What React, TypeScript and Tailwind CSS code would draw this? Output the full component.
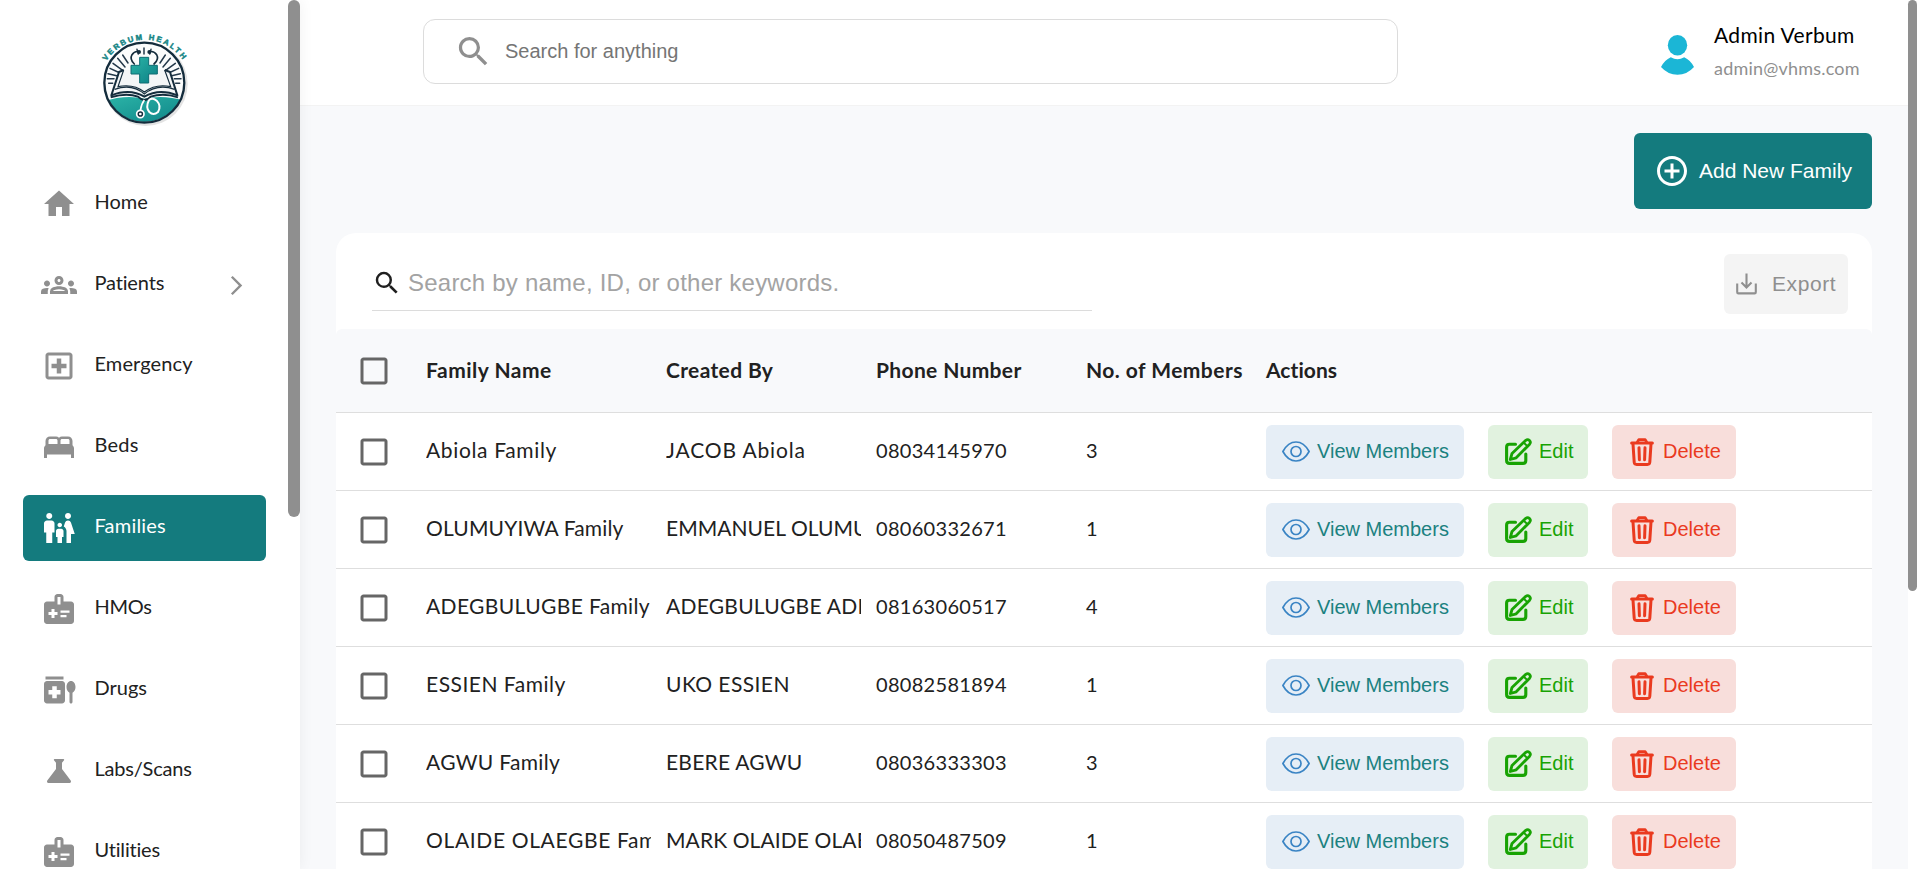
import type { ComponentType, ReactNode } from "react";
import {
  MdHome,
  MdOutlineGroups,
  MdOutlineLocalHospital,
  MdFamilyRestroom,
  MdMedicalInformation,
  MdMedicationLiquid,
  MdScience,
  MdSearch,
  MdArrowForwardIos,
  MdAddCircleOutline,
  MdCheckBoxOutlineBlank,
} from "react-icons/md";

function BedIcon({ className }: { className?: string }) {
  return (
    <svg viewBox="0 0 24 24" fill="currentColor" className={className}>
      <path d="M21 10.78V8c0-1.65-1.35-3-3-3h-4c-.77 0-1.47.3-2 .78-.53-.48-1.23-.78-2-.78H6C4.35 5 3 6.35 3 8v2.78c-.61.55-1 1.34-1 2.22v6.3h2v-2.3h16v2.3h2V13c0-.88-.39-1.67-1-2.22zM14 6.6h4c.55 0 1 .45 1 1V10h-6V7.6c0-.55.45-1 1-1zM5 7.6c0-.55.45-1 1-1h4c.55 0 1 .45 1 1V10H5V7.6z" />
    </svg>
  );
}

type NavItem = {
  label: string;
  icon: ComponentType<{ className?: string }>;
  tracking?: string;
  active?: boolean;
  nested?: boolean;
};

const nav: NavItem[] = [
  { label: "Home", icon: MdHome },
  { label: "Patients", icon: MdOutlineGroups, tracking: "tracking-[-0.15px]", nested: true },
  { label: "Emergency", icon: MdOutlineLocalHospital, tracking: "tracking-[0.1px]" },
  { label: "Beds", icon: BedIcon, tracking: "tracking-[0.2px]" },
  { label: "Families", icon: MdFamilyRestroom, tracking: "tracking-[0.2px]", active: true },
  { label: "HMOs", icon: MdMedicalInformation, tracking: "tracking-[-0.3px]" },
  { label: "Drugs", icon: MdMedicationLiquid },
  { label: "Labs/Scans", icon: MdScience, tracking: "tracking-[-0.2px]" },
  { label: "Utilities", icon: MdMedicalInformation, tracking: "tracking-[-0.2px]" },
];

const headings = [
  { title: "Family Name", tracking: "tracking-[0.5px]" },
  { title: "Created By", tracking: "tracking-[0.35px]" },
  { title: "Phone Number", tracking: "tracking-[0.35px]" },
  { title: "No. of Members", tracking: "tracking-[0.45px]" },
  { title: "Actions", tracking: "tracking-[0.05px]" },
];

const families = [
  { name: "Abiola Family", nameTracking: "tracking-[0.65px]", by: "JACOB Abiola", byTracking: "tracking-[0.85px]", phone: "08034145970", members: 3 },
  { name: "OLUMUYIWA Family", nameTracking: "tracking-[0.15px]", by: "EMMANUEL OLUMU", byTracking: "tracking-[0.05px]", phone: "08060332671", members: 1 },
  { name: "ADEGBULUGBE Family", nameTracking: "tracking-[0.37px]", by: "ADEGBULUGBE ADE", byTracking: "tracking-[0.25px]", phone: "08163060517", members: 4 },
  { name: "ESSIEN Family", nameTracking: "tracking-[0.5px]", by: "UKO ESSIEN", byTracking: "tracking-[0.43px]", phone: "08082581894", members: 1 },
  { name: "AGWU Family", nameTracking: "tracking-[0.32px]", by: "EBERE AGWU", byTracking: "tracking-[0.23px]", phone: "08036333303", members: 3 },
  { name: "OLAIDE OLAEGBE Fam", nameTracking: "tracking-[0.65px]", by: "MARK OLAIDE OLAE", byTracking: "tracking-[0.1px]", phone: "08050487509", members: 1 },
];

function Logo() {
  return (
    <svg viewBox="0 0 390 360" className="h-[120px] w-[130px]">
      <defs>
        <path id="logo-arc" d="M79 123 A137 137 0 0 1 315 131" />
        <clipPath id="logo-disc">
          <circle cx="193" cy="187" r="119" />
        </clipPath>
        <linearGradient id="logo-teal" x1="0" y1="0" x2="1" y2="1">
          <stop offset="0" stopColor="#2cb5a8" />
          <stop offset="1" stopColor="#0b7f84" />
        </linearGradient>
      </defs>
      <circle cx="197" cy="192" r="126" fill="#e3e3e3" />
      <circle cx="193" cy="187" r="124" fill="#fbfcfc" />
      <g clipPath="url(#logo-disc)">
        <path d="M60 248 Q130 222 193 236 Q260 222 330 248 V320 H60Z" fill="url(#logo-teal)" />
      </g>
      <circle cx="193" cy="188" r="120" fill="none" stroke="#142c3c" strokeWidth="7" />
      <g stroke="#24394a" strokeWidth="4.5" strokeLinecap="round">
        <path d="M192 84v18M171 88l4 14M213 88l-4 14M128 105l16 24M113 115l22 26M99 130l30 22M90 145l30 14M84 161l26 6M82 176h20M86 190h12" />
        <path d="M256 105l-16 24M271 115l-22 26M286 130l-30 22M296 145l-30 14M301 161l-26 6M303 176h-20M299 190h-12" />
      </g>
      <path d="M131 150 L117 156 L94 226 Q150 204 193 230 Q238 204 292 226 L270 156 L254 150" fill="#f4f6f7" stroke="#142c3c" strokeWidth="6" strokeLinejoin="round" />
      <path d="M104 208 Q156 190 193 222 Q232 190 284 208 M131 150 L114 200 Q160 190 193 216 Q228 190 272 200 L254 150" fill="none" stroke="#142c3c" strokeWidth="3.5" />
      <path d="M92 232 Q140 218 174 230 Q184 240 193 240 Q204 240 212 230 Q250 218 294 232" fill="none" stroke="#142c3c" strokeWidth="6" />
      <path d="M163 132 Q148 118 156 104 Q164 92 176 95 M222 132 Q238 118 230 104 Q222 92 209 95" fill="none" stroke="#142c3c" strokeWidth="5" strokeLinecap="round" />
      <circle cx="177" cy="96" r="6" fill="#142c3c" />
      <circle cx="208" cy="96" r="6" fill="#142c3c" />
      <path d="M179 112h27v24h26v26h-26v27h-27v-27h-26v-26h26z" fill="url(#logo-teal)" stroke="#0f6d73" strokeWidth="3" />
      <path d="M193 240 Q184 252 181 272" fill="none" stroke="#fff" strokeWidth="5" />
      <circle cx="181" cy="282" r="11" fill="#142c3c" stroke="#fff" strokeWidth="5" />
      <circle cx="181" cy="282" r="4" fill="#fff" />
      <path d="M207 240 Q196 262 208 276 Q220 288 234 276 Q245 258 230 242 Q218 232 207 240" fill="none" stroke="#fff" strokeWidth="6" />
      <text fill="#138484" stroke="#138484" strokeWidth="1.4" fontSize="23" fontWeight="700" fontFamily="Liberation Sans, sans-serif">
        <textPath href="#logo-arc" textLength="270">VERBUM HEALTH</textPath>
      </text>
    </svg>
  );
}

function Avatar() {
  return (
    <svg viewBox="0 0 33 40" className="h-10 w-[33px]" fill="#1bb6d6">
      <ellipse cx="16.5" cy="10.2" rx="9.7" ry="10.2" />
      <path d="M9.8 22.2Q16.5 26.4 23.2 22.2Q29.5 25 33 32Q26 39.8 16.5 39.8Q7 39.8 0 32Q3.5 25 9.8 22.2Z" />
    </svg>
  );
}

function ExportIcon() {
  return (
    <svg viewBox="0 0 22 22" className="h-[22px] w-[22px]" fill="none" stroke="#8f8f8f" strokeWidth="2.1">
      <path d="M10.5 0.5V14.5M5.5 9.6L10.5 14.6L15.5 9.6" />
      <path d="M1.2 10.5V19.2Q1.2 20.4 2.4 20.4H18.6Q19.8 20.4 19.8 19.2V10.5" />
    </svg>
  );
}

function EyeIcon() {
  return (
    <svg viewBox="0 0 28 21" className="h-[21px] w-7" fill="none" stroke="#3a84c4" strokeWidth="1.7">
      <path d="M0.9 10.5C4.2 4.4 8.8 1 14 1S23.8 4.4 27.1 10.5C23.8 16.6 19.2 20 14 20S4.2 16.6 0.9 10.5Z" strokeLinejoin="round" />
      <circle cx="14" cy="10.5" r="5" />
    </svg>
  );
}

function EditIcon() {
  return (
    <svg viewBox="0 0 27 27" className="h-[27px] w-[27px]" fill="none" stroke="#18a303" strokeLinecap="round" strokeLinejoin="round">
      <path d="M10.5 6.2H4.5Q1.6 6.2 1.6 9V22.5Q1.6 25.4 4.5 25.4H18Q20.8 25.4 20.8 22.5V16" strokeWidth="3.1" />
      <path d="M5.3 21.5L7 15.5L20.8 2.3Q22.7 0.8 24.5 2.5Q26.2 4.3 24.6 6.2L11.2 19.8Z" strokeWidth="2.8" />
      <path d="M18.6 4.6L22.4 8.2" strokeWidth="2" />
    </svg>
  );
}

function TrashIcon() {
  return (
    <svg viewBox="0 0 24 28" className="h-7 w-6" fill="none" stroke="#ea3a1f" strokeLinecap="round" strokeLinejoin="round">
      <path d="M1.6 5H22.4" strokeWidth="3" />
      <path d="M7.4 4L8.8 1.6H15.2L16.6 4" strokeWidth="2.8" />
      <path d="M3 6L4.2 24.2Q4.4 26.4 6.6 26.4H17.4Q19.6 26.4 19.8 24.2L21 6" strokeWidth="3" />
      <path d="M9 9.8L9.4 21.8M15 9.8L14.6 21.8" strokeWidth="3" />
    </svg>
  );
}

function ActionButton({ className, icon, children }: { className: string; icon: ReactNode; children: ReactNode }) {
  return (
    <button className={`flex h-[54px] items-center rounded-md font-['Liberation_Sans',Arial,sans-serif] text-[20px] leading-6 ${className}`}>
      {icon}
      <span className="pb-0.5">{children}</span>
    </button>
  );
}

const columns = "grid grid-cols-[90px_240px_210px_210px_180px_1fr]";

export default function App() {
  return (
    <div className="flex h-[869px] w-[1917px] overflow-hidden bg-[#f8f9fb] font-[Lato,'Open_Sans',sans-serif] text-[#212121] [font-variant-ligatures:none]">
      <aside className="z-10 flex w-[300px] shrink-0 bg-white shadow-[0_0_14px_rgba(0,0,0,0.06)]">
        <div className="flex w-72 shrink-0 flex-col overflow-hidden">
          <div className="flex h-[171px] shrink-0 justify-center pt-5 pl-0.5">
            <Logo />
          </div>
          <nav className="flex flex-col gap-[15px] pr-[22px] pl-[23px]">
            {nav.map(({ label, icon: Icon, tracking = "", active, nested }) => (
              <a
                key={label}
                className={`flex h-[66px] shrink-0 items-center gap-[17.5px] rounded-md px-[18px] ${active ? "bg-[#147b7e] text-white" : "text-[#212121]"}`}
              >
                <Icon className={`size-9 shrink-0 ${active ? "text-white" : "text-[#8f8f8f]"}`} />
                <span className={`pb-[6px] text-[20px] leading-7 ${tracking}`}>{label}</span>
                {nested && <MdArrowForwardIos className="ml-auto size-[23px] text-[#8f8f8f]" />}
              </a>
            ))}
          </nav>
        </div>
        <div className="h-[517px] w-3 rounded-full bg-[#8f8f8f]" />
      </aside>

      <div className="flex min-w-0 flex-1 flex-col">
        <header className="flex h-[106px] shrink-0 items-start border-b border-[#f3f3f3] bg-white pt-[19px] pl-[123px]">
          <div className="flex h-[65px] w-[975px] items-center rounded-xl border border-[#dcdcdc] pl-[30px]">
            <MdSearch className="size-[39px] text-[#8f8f8f]" />
            <span className="pb-0.5 pl-[12px] font-['Liberation_Sans',Arial,sans-serif] text-[20px] text-[#757575]">Search for anything</span>
          </div>
          <div className="mt-[16px] ml-[263px]">
            <Avatar />
          </div>
          <div className="ml-[20px] flex flex-col">
            <span className="text-[21px] leading-8 tracking-[0.35px] text-black">Admin Verbum</span>
            <span className="mt-[1px] text-[18px] leading-8 tracking-[0.2px] text-[#8f8f8f]">admin@vhms.com</span>
          </div>
        </header>

        <main className="flex flex-1 flex-col overflow-hidden pr-9 pl-9">
          <div className="flex justify-end pt-[27px] pb-6">
            <button className="flex h-[76px] w-[238px] items-center rounded-md bg-[#147b7e] pl-5 font-['Liberation_Sans',Arial,sans-serif] text-[21px] text-white">
              <MdAddCircleOutline className="mr-[9px] size-9" />
              Add New Family
            </button>
          </div>
          <section className="flex shrink-0 flex-col rounded-t-[20px] bg-white">
            <div className="flex h-24 shrink-0 items-start justify-between pr-6 pl-9">
              <div className="flex h-[78px] w-[720px] items-center border-b border-[#dcdcdc] pt-[22px]">
                <MdSearch className="size-[30px] text-[#1f1f1f]" />
                <span className="pl-[6px] font-['Liberation_Sans',Arial,sans-serif] text-[24px] tracking-[0.225px] text-[#a3a3a3]">
                  Search by name, ID, or other keywords.
                </span>
              </div>
              <button className="mt-[21px] flex h-[60px] w-[124px] items-center rounded-md bg-[#f4f4f4] pl-3 font-['Liberation_Sans',Arial,sans-serif] text-[21px] tracking-[0.6px] text-[#8f8f8f]">
                <ExportIcon />
                <span className="pl-[14px]">Export</span>
              </button>
            </div>
            <div className={`${columns} h-[84px] shrink-0 items-center rounded-t-md border-b border-[#dedede] bg-[#f8f9fb] text-[21px] font-bold`}>
              <MdCheckBoxOutlineBlank className="ml-5 size-9 text-[#666]" />
              {headings.map(({ title, tracking }) => (
                <span key={title} className={`pb-[1px] whitespace-nowrap ${tracking}`}>{title}</span>
              ))}
            </div>
            {families.map((family) => (
              <div key={family.phone} className={`${columns} h-[78px] shrink-0 items-center border-b border-[#dedede] text-[20px] leading-8`}>
                <MdCheckBoxOutlineBlank className="ml-5 size-9 text-[#666]" />
                <span className={`mr-[15px] overflow-hidden pb-[4px] text-[21px] whitespace-nowrap ${family.nameTracking}`}>{family.name}</span>
                <span className={`mr-[15px] overflow-hidden pb-[4px] text-[21px] whitespace-nowrap ${family.byTracking}`}>{family.by}</span>
                <span className="pb-[4px] tracking-[0.3px]">{family.phone}</span>
                <span className="pb-[4px]">{family.members}</span>
                <div className="flex gap-6">
                  <ActionButton className="w-[198px] gap-[7px] bg-[#e6eef6] pl-4 text-[#1b8180]" icon={<EyeIcon />}>View Members</ActionButton>
                  <ActionButton className="w-[100px] gap-[7px] bg-[#e1f2df] pl-[17px] text-[#18a303]" icon={<EditIcon />}>Edit</ActionButton>
                  <ActionButton className="w-[124px] gap-[9px] bg-[#f8dedb] pl-[18px] text-[#ea3a1f]" icon={<TrashIcon />}>Delete</ActionButton>
                </div>
              </div>
            ))}
          </section>
        </main>
      </div>
      <div className="w-[9px] shrink-0 bg-white">
        <div className="h-[591px] rounded-full bg-[#8f8f8f]" />
      </div>
    </div>
  );
}
